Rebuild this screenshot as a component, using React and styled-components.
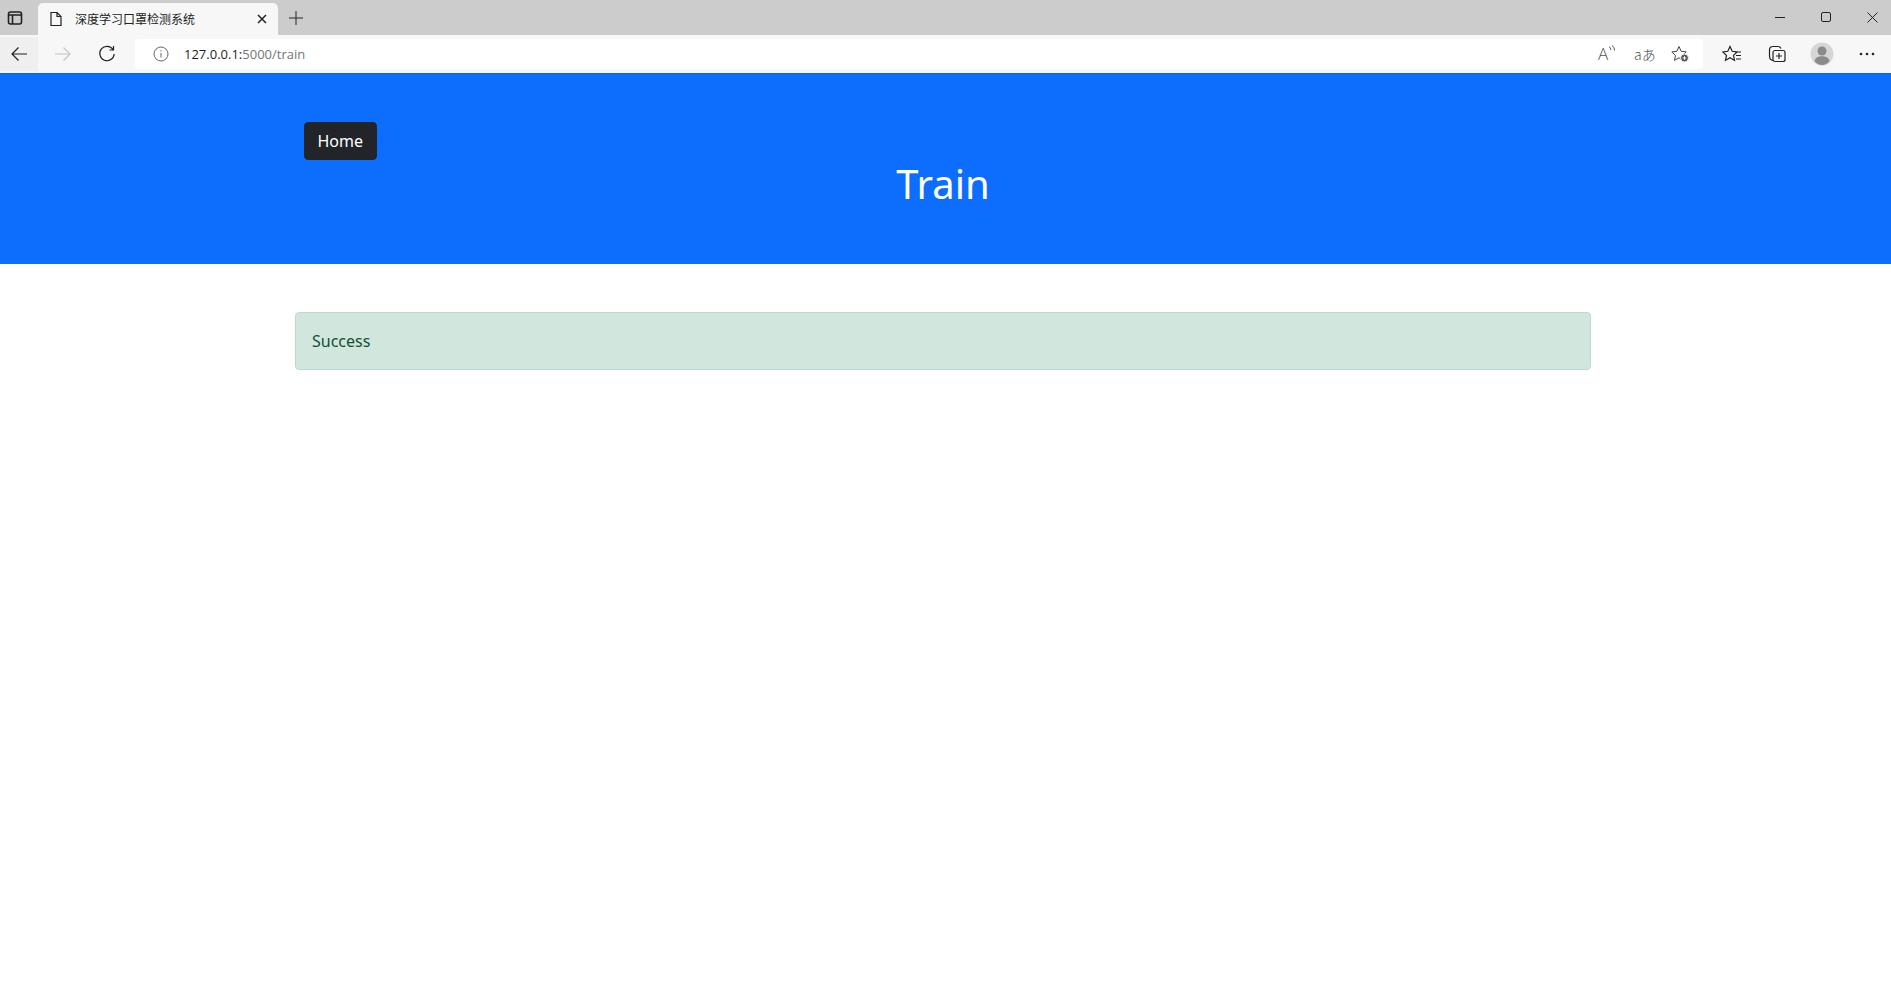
import styled, { createGlobalStyle } from "styled-components";
import { useState } from "react";

const GlobalStyle = createGlobalStyle`
  html, body {
    margin: 0;
    background: #fff;
    font-family: "Noto Sans", "Open Sans", "Liberation Sans", sans-serif;
  }
`;

const Page = styled.div`
  width: 1891px;
  height: 1005px;
  overflow: hidden;
  display: flex;
  flex-direction: column;
`;

const TabStrip = styled.div`
  height: 35px;
  background: #cccccc;
  display: flex;
  align-items: flex-end;
  flex-shrink: 0;
`;

const SideButton = styled.div`
  width: 38px;
  height: 35px;
  padding-right: 8px;
  box-sizing: border-box;
  display: flex;
  align-items: center;
  justify-content: center;
`;

const Tab = styled.div`
  width: 240px;
  height: 32px;
  background: #f7f7f7;
  border-radius: 5px 5px 0 0;
  display: flex;
  align-items: center;
  padding: 0 11px 0 11px;
  box-sizing: border-box;
`;

const TabTitle = styled.span`
  flex: 1;
  margin: 0 0 2px 12px;
  font-family: "Noto Sans CJK SC", sans-serif;
  font-size: 12px;
  color: #222;
  white-space: nowrap;
`;

const NewTab = styled.div`
  width: 36px;
  height: 35px;
  display: flex;
  align-items: center;
  justify-content: center;
`;

const WindowButtons = styled.div`
  margin-left: auto;
  margin-right: -4px;
  height: 35px;
  display: flex;
  align-items: center;
  flex-shrink: 0;
`;

const WindowButton = styled.div`
  width: 46px;
  height: 30px;
  display: flex;
  align-items: center;
  justify-content: center;
`;

const Toolbar = styled.div`
  height: 38px;
  background: #f7f7f7;
  display: flex;
  align-items: center;
  flex-shrink: 0;
`;

const NavButton = styled.div`
  width: ${(p) => p.$w}px;
  height: 34px;
  display: flex;
  align-items: center;
  justify-content: center;
  background: ${(p) => (p.$tint ? "#efefef" : "transparent")};
`;

const AddressBar = styled.div`
  width: 1568px;
  height: 30px;
  margin-left: 9px;
  background: #fff;
  border-radius: 4px;
  display: flex;
  align-items: center;
  padding: 0 13px 0 18px;
  box-sizing: border-box;
`;

const Url = styled.span`
  margin-left: 15px;
  font-size: 13px;
  color: #757575;
  font-family: "Open Sans", sans-serif;
`;

const UrlHost = styled.span`
  color: #1f1f1f;
`;

const AddressIcons = styled.div`
  margin-left: auto;
  display: flex;
  align-items: center;
  gap: 16px;
`;

const Translate = styled.span`
  width: 20px;
  font-family: "Noto Sans CJK JP", sans-serif;
  font-size: 14px;
  font-weight: 300;
  line-height: 18px;
  color: #555;
  text-align: center;
  white-space: nowrap;
`;

const ReadAloud = styled.span`
  width: 20px;
  display: flex;
  align-items: flex-start;
  font-family: "Open Sans", sans-serif;
  font-size: 17px;
  font-weight: 300;
  line-height: 18px;
  color: #555;
`;

const ToolIcons = styled.div`
  margin-left: 6px;
  display: flex;
  align-items: center;
`;

const ToolIcon = styled.div`
  width: 45px;
  height: 34px;
  display: flex;
  align-items: center;
  justify-content: center;
`;

const Hero = styled.header`
  height: 191px;
  background: #0d6efd;
  border-top: 1px solid #0a62e0;
  box-sizing: border-box;
  flex-shrink: 0;
`;

const Container = styled.div`
  width: 1296px;
  margin-left: 295px;
`;

const HomeButton = styled.a`
  display: inline-block;
  margin: 48px 0 0 9px;
  padding: 6px 12.5px;
  font-size: 16px;
  line-height: 24px;
  color: #fff;
  background: #212529;
  border: 1px solid #212529;
  border-radius: 4px;
  text-decoration: none;
`;

const Title = styled.h1`
  margin: 0;
  font-size: 40px;
  line-height: 48px;
  font-weight: 400;
  color: #fff;
  text-align: center;
`;

const Alert = styled.div`
  margin-top: 48px;
  height: 58px;
  box-sizing: border-box;
  padding: 16px;
  background: #d1e7dd;
  border: 1px solid #badbcc;
  border-radius: 4px;
  color: #0f5132;
  font-size: 16px;
  line-height: 24px;
`;

const Stroke = ({ w = 16, h = 16, vb = "0 0 16 16", c = "#222", sw = 1, children }) => (
  <svg width={w} height={h} viewBox={vb} fill="none" stroke={c} strokeWidth={sw}>
    {children}
  </svg>
);

function App() {
  const [message] = useState("Success");

  return (
    <Page>
      <GlobalStyle />
      <TabStrip>
        <SideButton>
          <Stroke sw={1.6}>
            <rect x="1.5" y="2" width="13" height="12" rx="2" />
            <path d="M1.5 5h13M5.500 5v9" />
          </Stroke>
        </SideButton>
        <Tab>
          <Stroke w={14} h={16} vb="0 0 14 16" sw={1.2}>
            <path d="M2 1.500h6l4 4v9H2zM8 1.500v4h4" />
          </Stroke>
          <TabTitle>深度学习口罩检测系统</TabTitle>
          <Stroke w={10} h={10} vb="0 0 10 10" sw={1.5}>
            <path d="M1 1l8 8M9 1l-8 8" />
          </Stroke>
        </Tab>
        <NewTab>
          <Stroke>
            <path d="M8 1v14M1 8h14" />
          </Stroke>
        </NewTab>
        <WindowButtons>
          <WindowButton>
            <Stroke w={11} h={11} vb="0 0 11 11"><path d="M0 5.500h10" /></Stroke>
          </WindowButton>
          <WindowButton>
            <Stroke w={11} h={11} vb="0 0 11 11"><rect x=".5" y=".5" width="9" height="9" rx="1.500" /></Stroke>
          </WindowButton>
          <WindowButton>
            <Stroke w={11} h={11} vb="0 0 11 11"><path d="M.5.5l10 10M10.500.5l-10 10" /></Stroke>
          </WindowButton>
        </WindowButtons>
      </TabStrip>
      <Toolbar>
        <NavButton $w={38} $tint>
          <Stroke w={18} h={18} vb="0 0 18 18" sw={1.2}><path d="M17 9H2M8.500 2.500L2 9l6.500 6.500" /></Stroke>
        </NavButton>
        <NavButton $w={50}>
          <Stroke w={18} h={18} vb="0 0 18 18" c="#c4c4c4" sw={1.2}><path d="M1 9h15M9.500 2.500L16 9l-6.500 6.500" /></Stroke>
        </NavButton>
        <NavButton $w={38}>
          <Stroke w={18} h={18} vb="0 0 18 18" sw={1.2}>
            <path d="M15 4.500A7.200 7.200 0 1 0 16.200 9M15.500 1v4h-4" />
          </Stroke>
        </NavButton>
        <AddressBar>
          <Stroke c="#666">
            <circle cx="8" cy="8" r="7" />
            <path d="M8 7v4.500M8 4.200v1.300" />
          </Stroke>
          <Url>
            <UrlHost>127.0.0.1:</UrlHost>5000/train
          </Url>
          <AddressIcons>
            <ReadAloud>
              A
              <Stroke w={8} h={10} vb="0 0 8 10" c="#555">
                <path d="M1 1.500c1.200.8 1.800 2 1.800 3.500M4 .5c1.500 1 2.500 3 2.500 5" />
              </Stroke>
            </ReadAloud>
            <Translate>aあ</Translate>
            <svg width="20" height="18" viewBox="0 0 20 18" fill="none" stroke="#444" strokeWidth="1">
              <path d="M9 1.500l2.200 4.800 5 .6-3.700 3.500 1 5L9 12.800 4.500 15.400l1-5L1.800 6.900l5-.6z" />
              <circle cx="14.500" cy="13" r="4" fill="#555" stroke="#f7f7f7" />
              <path d="M12.700 13h3.600M14.500 11.200v3.600" stroke="#fff" />
            </svg>
          </AddressIcons>
        </AddressBar>
        <ToolIcons>
          <ToolIcon>
            <Stroke w={20} h={18} vb="0 0 20 18" sw={1.2}>
              <path d="M8 1.500l2.200 4.800 5 .6-3.700 3.500 1 5L8 12.800 3.500 15.400l1-5L.8 6.900l5-.6zM13 7h6M14 10.500h5M14 14h5" />
            </Stroke>
          </ToolIcon>
          <ToolIcon>
            <Stroke w={18} h={18} vb="0 0 18 18" sw={1.2}>
              <path d="M5 15.500C2.500 15 1.500 13 1.500 11V5c0-2 1.500-3.500 3.500-3.500h5c1.500 0 2.500.8 3 2" />
              <rect x="5" y="5.500" width="12" height="11" rx="2" />
              <path d="M11 8v6M8 11h6" />
            </Stroke>
          </ToolIcon>
          <ToolIcon>
            <svg width="24" height="24" viewBox="0 0 24 24">
              <circle cx="12" cy="12" r="11.500" fill="#d6d6d6" />
              <circle cx="12" cy="9" r="4.500" fill="#8a8a8a" />
              <path d="M4.500 19c1-4 4-4.800 7.500-4.800s6.500.8 7.500 4.800c-2 2.500-4.500 4-7.500 4s-5.500-1.500-7.500-4z" fill="#8a8a8a" />
            </svg>
          </ToolIcon>
          <ToolIcon>
            <svg width="16" height="4" viewBox="0 0 16 4" fill="#222">
              <circle cx="2" cy="2" r="1.300" />
              <circle cx="8" cy="2" r="1.300" />
              <circle cx="14" cy="2" r="1.300" />
            </svg>
          </ToolIcon>
        </ToolIcons>
      </Toolbar>
      <Hero>
        <Container>
          <HomeButton href="#">Home</HomeButton>
          <Title>Train</Title>
        </Container>
      </Hero>
      <Container>
        <Alert>{message}</Alert>
      </Container>
    </Page>
  );
}

export default App;
